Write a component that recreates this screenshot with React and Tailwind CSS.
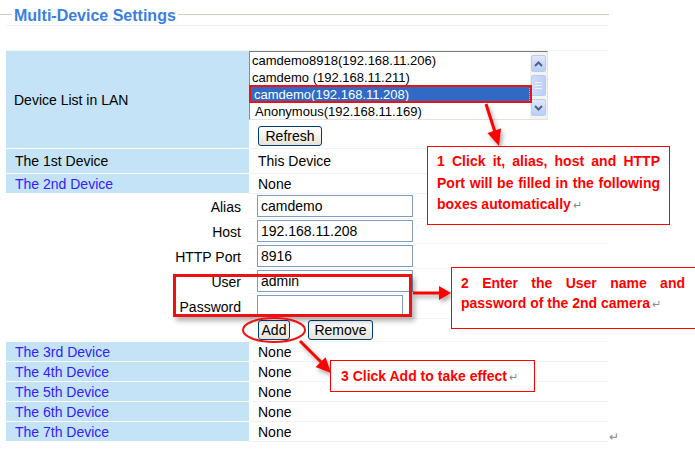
import React from 'react';

const listItems = [
  { text: 'camdemo8918(192.168.11.206)', pad: 'pl-[2px]' },
  { text: 'camdemo (192.168.11.211)', pad: 'pl-[2px]' },
  { text: 'camdemo(192.168.11.208)', pad: 'pl-[4px]', selected: true },
  { text: 'Anonymous(192.168.11.169)', pad: 'pl-[5px]' },
];

const fields = [
  { label: 'Alias', value: 'camdemo', width: 'w-[156px]' },
  { label: 'Host', value: '192.168.11.208', width: 'w-[156px]' },
  { label: 'HTTP Port', value: '8916', width: 'w-[156px]' },
  { label: 'User', value: 'admin', width: 'w-[156px]' },
  { label: 'Password', value: '', width: 'w-[146px]' },
];

const otherDevices = ['The 3rd Device', 'The 4th Device', 'The 5th Device', 'The 6th Device', 'The 7th Device'];

const Ret = () => <span className="ml-[2px] text-[11px] leading-none font-normal text-[#8a8a8a]">↵</span>;

const XpButton = ({ children, className = '' }) => (
  <button
    className={`h-[20px] border border-[#003c74] rounded-[3px] bg-linear-to-b from-white to-[#e6e3d6] text-[14px] leading-[18px] text-black ${className}`}
  >
    {children}
  </button>
);

const DeviceRow = ({ label, value, blue, tall }) => (
  <div className={`flex ${tall ? 'h-[25px]' : 'h-[20px]'}`}>
    <div
      className={`w-[243px] bg-[#c4e3f7] border-b border-white flex items-center pl-[9px] pt-px text-[14px] ${
        blue ? 'text-[#3320ff]' : 'text-black'
      }`}
    >
      {label}
    </div>
    <div className="flex-1 border-b border-[#f2f2f2] flex items-center pl-[9px] pt-px text-[14px] text-black">
      {value}
    </div>
  </div>
);

const ScrollBar = () => (
  <div className="w-[17px] flex flex-col bg-[#f4f3ee] py-[3px] px-px gap-[3px]">
    <div className="h-[17px] rounded-[2px] border border-[#b9cbf3] bg-linear-to-b from-[#dfe8fd] to-[#b9cdf8] flex items-center justify-center">
      <svg width="9" height="6" viewBox="0 0 9 6">
        <path d="M1 5 L4.5 1.5 L8 5" fill="none" stroke="#4d6185" strokeWidth="2" />
      </svg>
    </div>
    <div className="flex-1 rounded-[2px] border border-[#b9cbf3] bg-linear-to-r from-[#cfdcfb] to-[#bccff8] flex flex-col items-center justify-center gap-[2px]">
      <div className="w-[7px] h-px bg-[#eef3fe]" />
      <div className="w-[7px] h-px bg-[#eef3fe]" />
      <div className="w-[7px] h-px bg-[#eef3fe]" />
    </div>
    <div className="h-[17px] rounded-[2px] border border-[#b9cbf3] bg-linear-to-b from-[#dfe8fd] to-[#b9cdf8] flex items-center justify-center">
      <svg width="9" height="6" viewBox="0 0 9 6">
        <path d="M1 1 L4.5 4.5 L8 1" fill="none" stroke="#4d6185" strokeWidth="2" />
      </svg>
    </div>
  </div>
);

export default function App() {
  return (
    <div className="relative w-[695px] h-[459px] bg-white overflow-hidden font-['Liberation_Sans',Arial,sans-serif]">
      {/* legend line */}
      <div className="flex items-start h-[25px] w-[609px]">
        <div className="w-[12px] h-px mt-[14px] bg-[#cfcfbd]" />
        <div className="px-[2px] mt-[6px] text-[16px] leading-[20px] font-bold text-[#3a7fe0]">
          Multi-Device Settings
        </div>
        <div className="flex-1 h-px mt-[14px] bg-[#cfcfbd]" />
      </div>

      <div className="ml-[6px] w-[603px]">
        <div className="h-[26px] border-y border-[#f2f2f2]" />

        {/* device list */}
        <div className="flex h-[98px]">
          <div className="w-[243px] bg-[#c4e3f7] border-b border-white flex items-center pl-[8px] pt-px text-[14px] text-black">
            Device List in LAN
          </div>
          <div className="flex-1 border-b border-[#f2f2f2]">
            <div className="w-[299px] h-[69px] flex border border-t-[#7a7a7a] border-l-[#8a8a8a] border-r-[#e4e2da] border-b-[#e4e2da] bg-white">
              <div className="flex-1 flex flex-col">
                {listItems.map((it) => (
                  <div
                    key={it.text}
                    className={`h-[17px] leading-[17px] text-[13px] whitespace-nowrap ${it.pad} ${
                      it.selected ? 'bg-[#316ac5] text-white outline outline-dotted outline-[#a0b8e0] -outline-offset-1' : 'text-black'
                    }`}
                  >
                    {it.text}
                  </div>
                ))}
              </div>
              <ScrollBar />
            </div>
            <XpButton className="mt-[6px] ml-[9px] w-[64px]">Refresh</XpButton>
          </div>
        </div>

        <DeviceRow label="The 1st Device" value="This Device" tall />
        <DeviceRow label="The 2nd Device" value="None" blue />

        {fields.map((f) => (
          <div key={f.label} className="flex h-[25px]">
            <div className="w-[243px] flex items-center justify-end pr-[8px] pt-px text-[14px] text-black">{f.label}</div>
            <div className="flex-1 border-b border-[#f4f4f4] flex items-center pl-[8px]">
              <div className={`${f.width} h-[22px] border border-[#7f9db9] pl-[3px] text-[14px] leading-[20px] text-black`}>
                {f.value}
              </div>
            </div>
          </div>
        ))}

        <div className="flex h-[23px]">
          <div className="w-[243px]" />
          <div className="flex-1 border-b border-[#f4f4f4] flex items-start pt-px pl-[9px] gap-[18px]">
            <XpButton className="w-[32px]">Add</XpButton>
            <XpButton className="w-[65px]">Remove</XpButton>
          </div>
        </div>

        {otherDevices.map((d) => (
          <DeviceRow key={d} label={d} value="None" blue />
        ))}
      </div>

      <div className="absolute left-[609px] top-[428px] text-[12px] text-[#8a8a8a]">↵</div>

      {/* highlight rectangles */}
      <div className="absolute left-[249px] top-[85px] w-[283px] h-[18px] border-2 border-[#ee1111]" />
      <div className="absolute left-[173px] top-[274px] w-[239px] h-[43px] border-[3px] border-[#ee1111] shadow-[3px_4px_5px_rgba(0,0,0,0.3)]" />

      {/* arrows */}
      <svg className="absolute inset-0 pointer-events-none" width="695" height="459" viewBox="0 0 695 459">
        <defs>
          <filter id="sh" x="-20%" y="-20%" width="140%" height="140%">
            <feDropShadow dx="2" dy="3" stdDeviation="2" floodColor="#000" floodOpacity="0.35" />
          </filter>
        </defs>
        <g filter="url(#sh)" fill="#ff0000" stroke="#ff0000">
          <line x1="486" y1="104" x2="495" y2="132" strokeWidth="3" />
          <polygon points="499,146 487.5,133 501,128.5" stroke="none" />
          <line x1="413" y1="293" x2="441" y2="293" strokeWidth="3" />
          <polygon points="451,293 439,286 439,300" stroke="none" />
          <line x1="300" y1="341" x2="321" y2="362" strokeWidth="3" />
          <polygon points="331,373 325.6,357.3 315.6,367.1" stroke="none" />
        </g>
        <ellipse cx="274" cy="330" rx="31" ry="12" fill="none" stroke="#ee1111" strokeWidth="2" />
      </svg>

      {/* annotations */}
      <div className="absolute left-[427px] top-[146px] w-[243px] h-[79px] border-[1.5px] border-[#ff0000] bg-white pt-[4px] pl-[9px] pr-[9px] text-[14px] leading-[21.5px] font-bold text-[#ff0000] text-justify">
        1 Click it, alias, host and HTTP Port will be filled in the following boxes automatically<Ret />
      </div>
      <div className="absolute left-[451px] top-[267px] w-[246px] h-[62px] border-[1.5px] border-[#ff0000] bg-white pt-[5px] pl-[9px] pr-[11px] text-[14px] leading-[20px] font-bold text-[#ff0000] text-justify">
        2 Enter the User name and password of the 2nd camera<Ret />
      </div>
      <div className="absolute left-[330px] top-[360px] w-[205px] h-[32px] border-[1.5px] border-[#ff0000] bg-white pl-[10px] pt-[5px] text-[14px] leading-[20px] font-bold text-[#ff0000]">
        3 Click Add to take effect<Ret />
      </div>
    </div>
  );
}
